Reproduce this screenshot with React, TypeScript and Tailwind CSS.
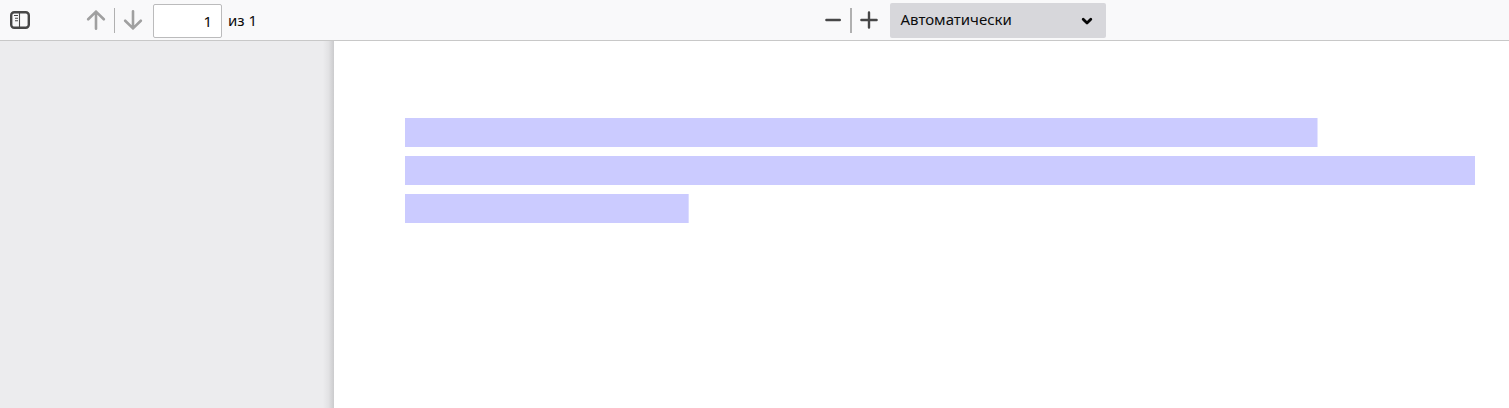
import React from "react";

function SidebarIcon() {
  return (
    <svg className="block h-5 w-5" viewBox="0 0 20 20" fill="none" stroke="#474747">
      <rect x="1.2" y="2.2" width="17.6" height="15.6" rx="3" strokeWidth="2.4" />
      <path d="M9.5 2.5v15" strokeWidth="1.1" />
      <path d="M4 5.5h4M5 8.2h3M5 10.8h3" strokeWidth="1.1" />
    </svg>
  );
}

function ArrowIcon({ down = false }: { down?: boolean }) {
  return (
    <svg
      className={down ? "block h-5 w-5 rotate-180" : "block h-5 w-5"}
      viewBox="0 0 20 20"
      fill="none"
      stroke="#a0a0a0"
      strokeWidth="2.6"
      strokeLinecap="round"
      strokeLinejoin="round"
    >
      <path d="M10 18.7V1.6M2.2 9.3L10 1.6l7.8 7.7" />
    </svg>
  );
}

function Toolbar() {
  return (
    <header className="flex h-[41px] shrink-0 items-start border-b border-[#c8c8c8] bg-[#f9f9fa]">
      <button className="mt-[10px] ml-[10px]" aria-label="Боковая панель">
        <SidebarIcon />
      </button>
      <button className="mt-[10px] ml-[56px]" aria-label="Предыдущая">
        <ArrowIcon />
      </button>
      <span className="mt-2 ml-2 h-[25px] w-px bg-[#b0b0b0]" />
      <button className="mt-[10px] ml-2" aria-label="Следующая">
        <ArrowIcon down />
      </button>
      <input
        className="mt-1 ml-[10px] h-[34px] w-[69px] rounded-[2px] border border-[#bbbbbc] bg-white pr-[9px] text-right text-[15px] text-[#060606]"
        defaultValue="1"
      />
      <span className="mt-[10px] ml-[6px] w-[40px] text-[15px] leading-5 whitespace-nowrap">из 1</span>
      <button className="mt-[10px] ml-[555px]" aria-label="Уменьшить">
        <svg className="block h-5 w-5" viewBox="0 0 20 20" stroke="#474747" strokeWidth="2.4" strokeLinecap="round">
          <path d="M3.4 10h13.4" />
        </svg>
      </button>
      <span className="mt-2 ml-[7px] h-[25px] w-[2px] bg-[#b0b0b0]" />
      <button className="mt-[10px] ml-[7px]" aria-label="Увеличить">
        <svg className="block h-5 w-5" viewBox="0 0 20 20" stroke="#474747" strokeWidth="2.4" strokeLinecap="round">
          <path d="M2.4 10h15.2M10 2.4v15.2" />
        </svg>
      </button>
      <button className="mt-[3px] ml-[11px] flex h-[35px] w-[216px] items-center justify-between rounded-[2px] bg-[#d7d7db] pr-[13px] pb-px pl-[10.5px] text-[15px]">
        <span className="-mt-px">Автоматически</span>
        <svg className="mt-[2px] block h-3 w-3" viewBox="0 0 12 12" fill="none" stroke="#060606" strokeWidth="2.8" strokeLinecap="round" strokeLinejoin="round">
          <path d="M2.2 4.2L6 7.9l3.8-3.7" />
        </svg>
      </button>
    </header>
  );
}

export default function App() {
  return (
    <div className="flex h-[408px] w-full flex-col overflow-hidden bg-[#ececee] font-['Noto_Sans',sans-serif] text-[#0c0c0d]">
      <Toolbar />
      <main className="flex min-h-0 flex-1">
        <aside className="flex w-[334px] shrink-0 justify-end">
          <div className="w-[11px] bg-linear-to-r from-[#ececee] via-[#e2e2e4] to-[#cbcbcd]" />
        </aside>
        <section className="flex flex-1 flex-col gap-[9px] bg-white pt-[77px] pl-[71px]">
          <div className="h-[29px] w-[913px] border-r border-[#e4e4ff] bg-[#cbcbff]" />
          <div className="h-[29px] w-[1070px] bg-[#cbcbff]" />
          <div className="h-[29px] w-[284px] border-r border-[#dcdcff] bg-[#cbcbff]" />
        </section>
      </main>
    </div>
  );
}
